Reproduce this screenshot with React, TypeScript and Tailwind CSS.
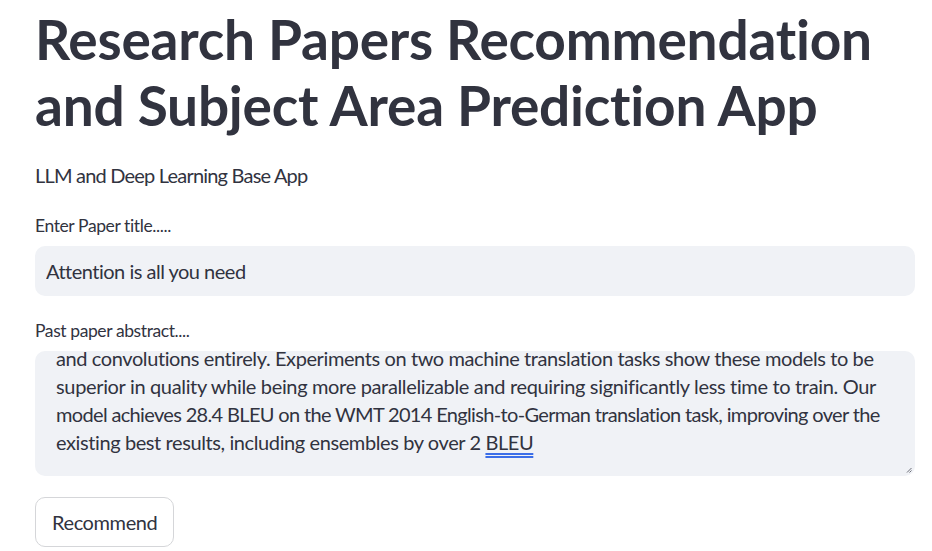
import { useState } from "react";

const abstractLines = [
  {
    text: "and convolutions entirely. Experiments on two machine translation tasks show these models to be",
    cls: "",
  },
  {
    text: "superior in quality while being more parallelizable and requiring significantly less time to train. Our",
    cls: "tracking-[-0.017em]",
  },
  {
    text: "model achieves 28.4 BLEU on the WMT 2014 English-to-German translation task, improving over the",
    cls: "tracking-[-0.033em]",
  },
];

function ResizeGrip() {
  return (
    <svg width="6" height="6" viewBox="0 0 6 6" className="text-[#6b6d76]">
      <path d="M5.5 1 L1 5.5 M5.5 3.5 L3.5 5.5" stroke="currentColor" strokeWidth="1" />
    </svg>
  );
}

export default function App() {
  const [title, setTitle] = useState("Attention is all you need");

  return (
    <div
      className="min-h-screen bg-white text-[#31333f] tracking-[-0.025em]"
      style={{ fontFamily: "Lato, 'Noto Sans', sans-serif" }}
    >
      <div className="w-[915px] pl-[35px]">
        <h1 className="pt-[6px] text-[55px] font-bold leading-[66px] tracking-[-0.004em] whitespace-nowrap">
          Research Papers Recommendation
          <br />
          and Subject Area Prediction App
        </h1>

        <p className="mt-[21px] text-[20px] leading-[32px] tracking-[-0.04em]">LLM and Deep Learning Base App</p>

        <label className="mt-[23px] block text-[17.5px] leading-[24px]">Enter Paper title.....</label>
        <div className="mt-[8px] flex h-[50px] items-center rounded-[10px] bg-[#f0f2f6] px-[11px]">
          <input
            value={title}
            onChange={(e) => setTitle(e.target.value)}
            className="w-full bg-transparent text-[20px] tracking-[-0.025em] text-[#31333f] outline-none"
          />
        </div>

        <label className="mt-[23px] block text-[17.5px] leading-[24px]">Past paper abstract....</label>
        <div className="mt-[8px] flex h-[125px] items-end justify-between overflow-hidden rounded-[10px] bg-[#f0f2f6] pl-[21px] pr-[3px] pb-[3px]">
          <div className="-mt-[7px] self-start text-[20px] leading-[28px] whitespace-nowrap">
            {abstractLines.map((line) => (
              <div key={line.text} className={line.cls}>
                {line.text}
              </div>
            ))}
            <div>
              existing best results, including ensembles by over 2{" "}
              <span className="underline decoration-double decoration-[#3b6ee8] underline-offset-[3px]">
                BLEU
              </span>
            </div>
          </div>
          <ResizeGrip />
        </div>

        <button className="mt-[21px] h-[50px] rounded-[10px] border border-[#d5d6d9] bg-white px-[16px] text-[20px]">
          Recommend
        </button>
      </div>
    </div>
  );
}
